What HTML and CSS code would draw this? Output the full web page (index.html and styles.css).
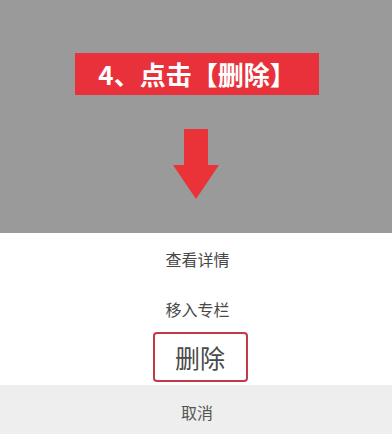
FILE: index.html
```html
<!DOCTYPE html>
<html lang="zh">
<head>
<meta charset="utf-8">
<link rel="stylesheet" href="styles.css">
</head>
<body>
<div class="screen">
  <div class="overlay">
    <div class="banner">4、点击【删除】</div>
    <svg class="arrow" width="48" height="70" viewBox="0 0 48 70">
      <polygon points="12,0 36,0 36,36 47,36 24,70 1,36 12,36" fill="#ea3338"/>
    </svg>
  </div>
  <div class="sheet">
    <div class="item first">查看详情</div>
    <div class="item second">移入专栏</div>
    <div class="delete-row"><div class="delete-box">删除</div></div>
    <div class="cancel">取消</div>
  </div>
</div>
</body>
</html>
```
FILE: styles.css
```css
html, body {
  margin: 0;
  padding: 0;
}
body {
  width: 392px;
  height: 434px;
  overflow: hidden;
  font-family: "Noto Sans CJK SC", "Noto Sans", sans-serif;
}
.screen {
  display: flex;
  flex-direction: column;
  height: 434px;
}
.overlay {
  height: 233px;
  background: #9a9a9a;
  display: flex;
  flex-direction: column;
  align-items: center;
}
.banner {
  margin-top: 53px;
  margin-left: 2px;
  width: 244px;
  height: 42px;
  background: #e8313a;
  color: #ffffff;
  font-weight: bold;
  font-size: 26px;
  line-height: 42px;
  text-align: center;
  white-space: nowrap;
}
.arrow {
  margin-top: 34px;
  display: block;
}
.sheet {
  flex: 1;
  background: #ffffff;
  display: flex;
  flex-direction: column;
}
.item {
  display: flex;
  align-items: center;
  justify-content: center;
  padding-left: 3px;
  font-size: 16px;
  color: #484848;
}
.item.first {
  height: 52px;
}
.item.second {
  height: 47px;
}
.delete-row {
  display: flex;
  justify-content: center;
  padding-left: 8px;
  height: 50px;
}
.delete-box {
  box-sizing: border-box;
  width: 95px;
  height: 50px;
  border: 2px solid #c23a47;
  border-radius: 4px;
  display: flex;
  align-items: center;
  justify-content: center;
  font-size: 25px;
  color: #4a4a4a;
}
.cancel {
  margin-top: 3px;
  flex: 1;
  background: #eeeeee;
  display: flex;
  align-items: center;
  justify-content: center;
  padding-top: 4px;
  padding-left: 2px;
  font-size: 16px;
  color: #555555;
}
```
